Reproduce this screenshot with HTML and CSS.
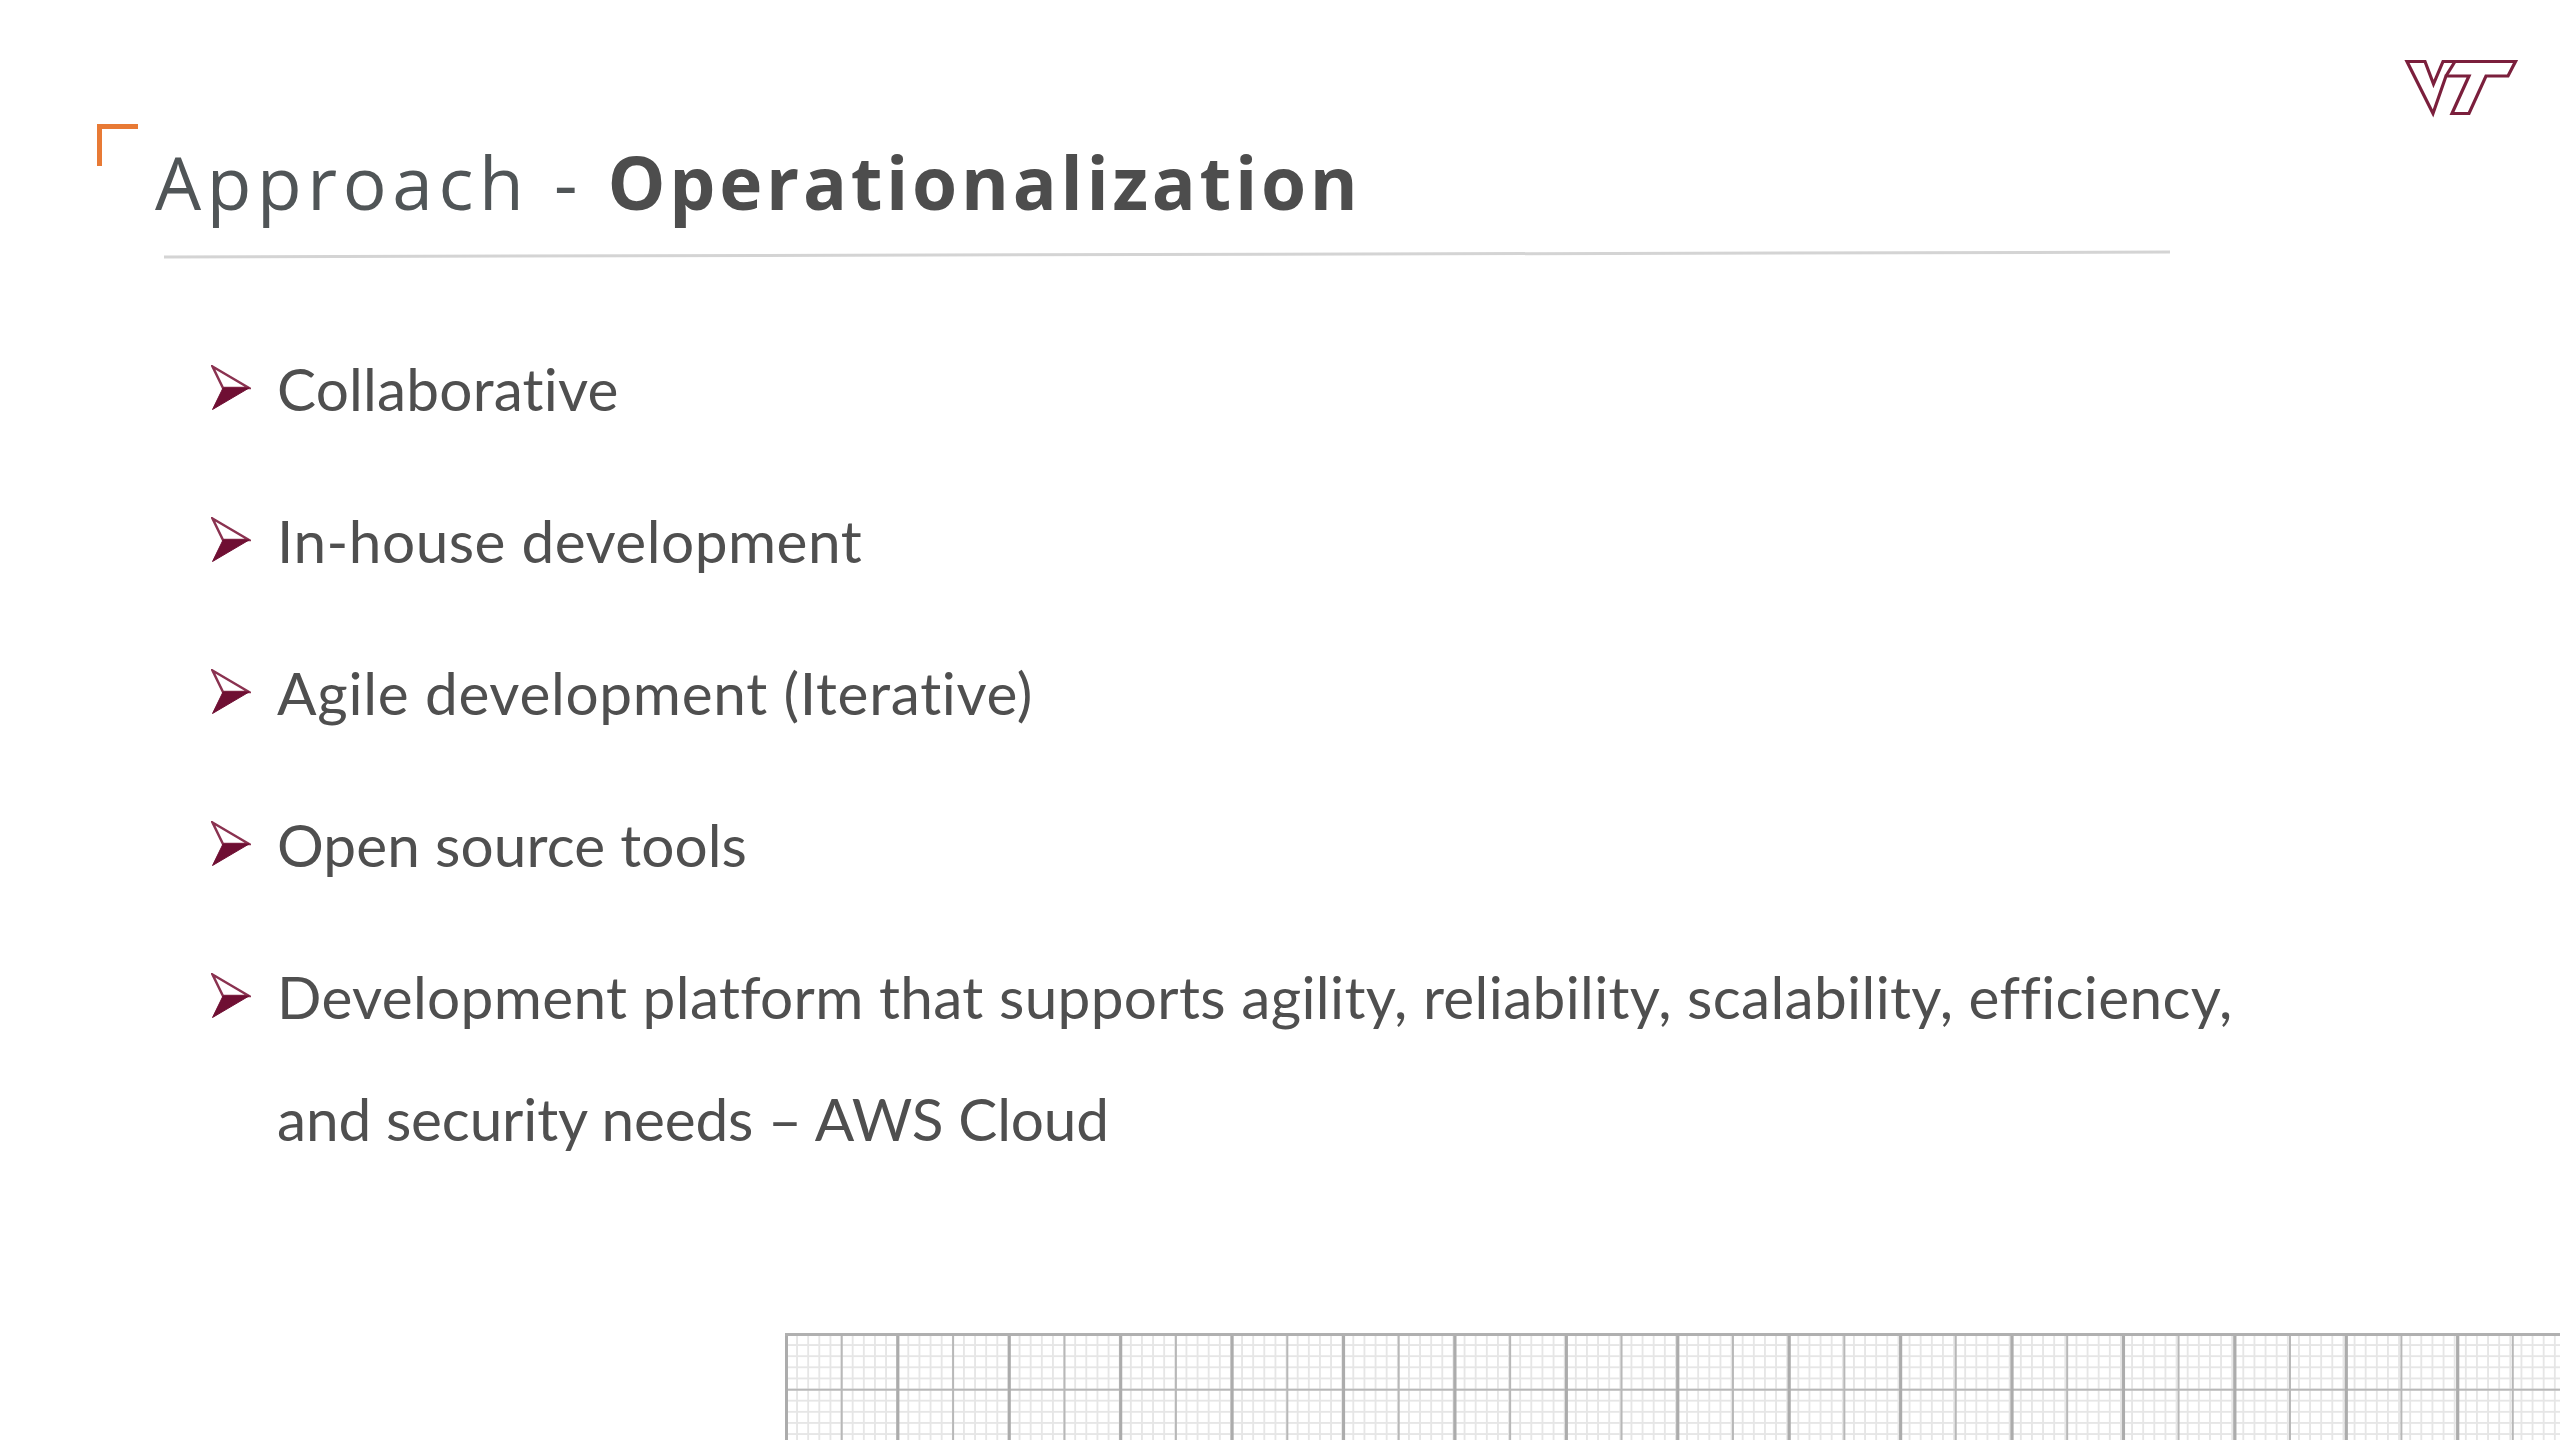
FILE: index.html
```html
<!DOCTYPE html>
<html lang="en">
<head>
<meta charset="utf-8">
<title>Approach - Operationalization</title>
<link rel="stylesheet" href="styles.css">
</head>
<body>
<main class="slide">
  <span class="corner"></span>
  <svg class="logo" viewBox="0 0 160 90" aria-label="VT logo">
    <path class="logo-line" d="M27 21.5H45L53.5 44L63 21.5H135.5L128 36H106L89 73.5H72L89 36H66L53 73.5Z"/>
    <path class="logo-line" d="M75 21.5L66 36"/>
  </svg>
  <header class="head">
    <h1 class="title">Approach - <b>Operationalization</b></h1>
    <div class="rule"></div>
  </header>
  <ul class="points">
    <li class="point"><svg class="arrow" viewBox="0 0 40 46"><path class="arrow-top" d="M1.5 1.5L38 23H12Z"/><path class="arrow-low" d="M12 23H38L1.5 44.5Z"/></svg><span>Collaborative</span></li>
    <li class="point"><svg class="arrow" viewBox="0 0 40 46"><path class="arrow-top" d="M1.5 1.5L38 23H12Z"/><path class="arrow-low" d="M12 23H38L1.5 44.5Z"/></svg><span class="wide">In-house development</span></li>
    <li class="point"><svg class="arrow" viewBox="0 0 40 46"><path class="arrow-top" d="M1.5 1.5L38 23H12Z"/><path class="arrow-low" d="M12 23H38L1.5 44.5Z"/></svg><span class="wider">Agile development (Iterative)</span></li>
    <li class="point"><svg class="arrow" viewBox="0 0 40 46"><path class="arrow-top" d="M1.5 1.5L38 23H12Z"/><path class="arrow-low" d="M12 23H38L1.5 44.5Z"/></svg><span class="snug">Open source tools</span></li>
    <li class="point"><svg class="arrow" viewBox="0 0 40 46"><path class="arrow-top" d="M1.5 1.5L38 23H12Z"/><path class="arrow-low" d="M12 23H38L1.5 44.5Z"/></svg><span class="long">Development platform that supports agility, reliability, scalability, efficiency,<br><span class="tight">and security needs – AWS Cloud</span></span></li>
  </ul>
  <div class="grid"></div>
</main>
</body>
</html>
```
FILE: styles.css
```css
* { box-sizing: border-box; }
html, body { margin: 0; padding: 0; background: #fff; }
.slide {
  position: relative;
  width: 2560px;
  height: 1440px;
  overflow: hidden;
  display: flex;
  flex-direction: column;
  background: #fff;
}
.corner {
  position: absolute;
  left: 97px;
  top: 124px;
  width: 41px;
  height: 42px;
  border-top: 5px solid #e87a35;
  border-left: 5px solid #e87a35;
}
.logo {
  position: absolute;
  left: 2380px;
  top: 40px;
  width: 160px;
  height: 90px;
}
.logo-line {
  fill: none;
  stroke: #7b1f3c;
  stroke-width: 3.2;
  stroke-linejoin: miter;
}
.head { padding: 132px 0 0 155px; }
.title {
  margin: 0;
  font: 400 73px/100px "Open Sans", sans-serif;
  letter-spacing: 5.6px;
  color: #505557;
}
.title b { font-weight: 700; color: #4d4d4d; letter-spacing: 3.7px; }
.rule {
  width: 2006px;
  height: 3px;
  margin: 21px 0 0 9px;
  background: #d4d4d4;
  transform: rotate(-0.14deg);
}
.points {
  list-style: none;
  margin: 71px 0 0;
  padding: 0 0 0 211px;
  display: flex;
  flex-direction: column;
  gap: 30px;
}
.point {
  display: flex;
  gap: 26px;
  font: 400 58.5px/122px Lato, sans-serif;
  font-variant-ligatures: none;
  letter-spacing: 0.2px;
  color: #4f4f4f;
}
.wide { letter-spacing: 0.5px; }
.wider { letter-spacing: 0.7px; }
.snug { letter-spacing: 0.1px; }
.long { letter-spacing: 0.34px; }
.tight { letter-spacing: -0.14px; }
.arrow { width: 40px; height: 46px; flex: none; margin-top: 38px; }
.arrow-top { fill: #fff; stroke: #8a3250; stroke-width: 2.5; stroke-linejoin: miter; }
.arrow-low { fill: #6f0f33; stroke: #6f0f33; stroke-width: 1; }
.grid {
  margin: auto 0 0 785px;
  flex: none;
  width: 1775px;
  height: 107px;
  border-top: 3px solid #b0b0b0;
  background-color: #fff;
  background-image:
    linear-gradient(90deg, #acacac 3px, transparent 3px),
    linear-gradient(90deg, #b8b8b8 2px, transparent 2px),
    linear-gradient(#b8b8b8 2px, transparent 2px),
    linear-gradient(90deg, #e6e6e6 2px, transparent 2px),
    linear-gradient(#e6e6e6 2px, transparent 2px);
  background-size: 111.43px 100%, 55.71px 100%, 100% 55.71px, 11.14px 100%, 100% 11.14px;
  background-position: 0 0, 0 0, 0 -3px, 0 0, 0 -3px;
}
```
